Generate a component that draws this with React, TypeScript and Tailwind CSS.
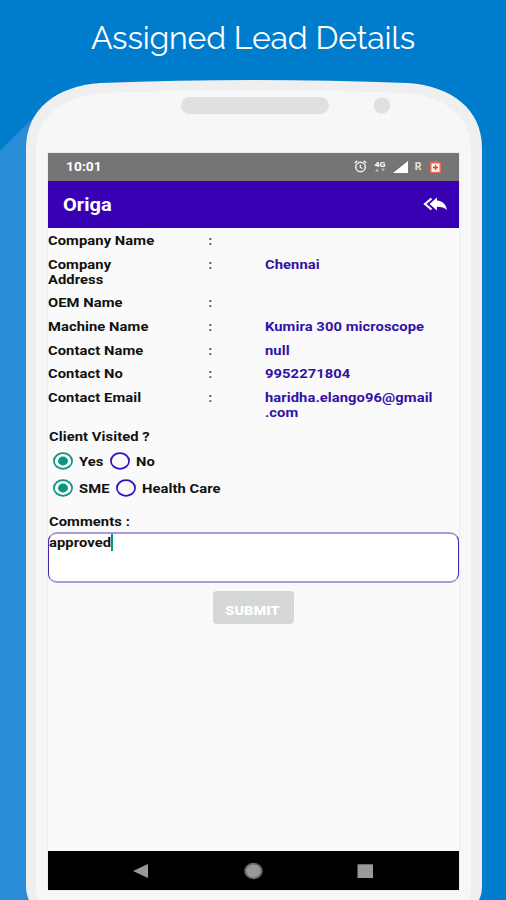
const rows = [
    { label: ["Company Name"], value: [] },
    { label: ["Company", "Address"], value: ["Chennai"] },
    { label: ["OEM Name"], value: [] },
    { label: ["Machine Name"], value: ["Kumira 300 microscope"] },
    { label: ["Contact Name"], value: ["null"] },
    { label: ["Contact No"], value: ["9952271804"] },
    { label: ["Contact Email"], value: ["haridha.elango96@gmail", ".com"] },
];

function Lines({ lines }: { lines: string[] }) {
    return (
        <div className="origin-left scale-x-[1.18] whitespace-nowrap">
            {lines.map((line) => (
                <div key={line}>{line}</div>
            ))}
        </div>
    );
}

function Radio({ checked = false }: { checked?: boolean }) {
    return (
        <svg width="20" height="18" viewBox="0 0 20 18" className="shrink-0">
            <ellipse cx="10" cy="9" rx="9.1" ry="7.8" fill="none" strokeWidth="1.7" stroke={checked ? "#0b9580" : "#3311bb"} />
            {checked && <ellipse cx="10" cy="9" rx="5" ry="4.4" fill="#0b9580" />}
        </svg>
    );
}

function Choice({ label, width, checked }: { label: string; width: string; checked?: boolean }) {
    return (
        <div className={`flex items-center gap-[6px] ${width}`}>
            <Radio checked={checked} />
            <Lines lines={[label]} />
        </div>
    );
}

function Backdrop() {
    return (
        <svg className="absolute inset-0" width="506" height="900" viewBox="0 0 506 900">
            <path d="M0 151 L50 101 V900 H0Z" fill="#288dd6" />
            <path d="M29 900 Q26 894 26 886 V148 C26 109 57 86 100 83 Q178 80 254 80 Q330 80 408 83 C451 86 482 109 482 148 V886 Q482 894 479 900Z" fill="#efefef" />
            <path d="M38 900 Q36 894 36 886 V150 C36 118 62 96 102 93 Q178 90 254 90 Q330 90 406 93 C446 96 471 118 471 150 V886 Q471 894 469 900Z" fill="#f5f7f9" />
            <rect x="181" y="97" width="148" height="17" rx="8.5" fill="#e0e0e0" />
            <circle cx="382" cy="105.5" r="8.3" fill="#e0e0e0" />
        </svg>
    );
}

function StatusBar() {
    return (
        <div className="flex h-[28px] items-center bg-[#757575] pr-[18px] pb-px pl-[18px] text-white">
            <span className="origin-left scale-x-[1.1] text-[12.5px] font-bold">10:01</span>
            <div className="ml-auto flex items-center">
                <svg width="13" height="13" viewBox="0 0 13 13" fill="none" stroke="#f0f0f0" strokeWidth="1.5">
                    <ellipse cx="6.5" cy="7" rx="4.8" ry="4.7" />
                    <path d="M0.7 3 L3.3 0.9 M12.3 3 L9.7 0.9" />
                    <path d="M6.3 4.5 V7.3 L8.5 8.5" strokeWidth="1.2" />
                </svg>
                <div className="ml-[7px] flex w-[12px] flex-col items-center text-[8px] leading-[7px] tracking-normal">
                    <span className="scale-x-110">4G</span>
                    <svg width="10" height="4" viewBox="0 0 10 4" fill="#bbb">
                        <path d="M0 3.5 L2 0.5 L4 3.5Z M6 0.5 H10 L8 3.5Z" />
                    </svg>
                </div>
                <svg width="15" height="12" viewBox="0 0 15 12" className="ml-[7px]">
                    <path d="M0 12 L15 0 V12Z" fill="white" />
                </svg>
                <span className="ml-[7px] text-[10.5px] text-white/80">R</span>
                <svg width="11" height="12" viewBox="0 0 11 12" className="ml-[8px]">
                    <path d="M3.5 0 H7.5 V1.2 H11 V12 H0 V1.2 H3.5Z" fill="#e96b52" />
                    <path d="M1.5 2.5 H9.5 V10.8 H1.5Z" fill="#fff0eb" />
                    <path d="M5.5 4 V9 M3 6.5 H8" stroke="#e0452c" strokeWidth="1.5" />
                </svg>
            </div>
        </div>
    );
}

function AppBar() {
    return (
        <div className="flex h-[47px] items-center justify-between bg-[#3700b3] pr-[12px] pl-[15px] text-white">
            <h1 className="origin-left scale-x-[1.08] pt-px text-[18.5px] font-bold">Origa</h1>
            <svg width="24" height="14" viewBox="0 0 24 14" className="relative -top-px">
                <path d="M8.5 1.5 L2 7 L8.5 12.5" fill="none" stroke="white" strokeWidth="2.2" />
                <path d="M14 0.5 V3.5 C20 4 23 7.5 24 13 C21.5 10.5 18.5 9.7 14 9.7 V13.5 L6.5 7Z" fill="white" />
            </svg>
        </div>
    );
}

function NavBar() {
    return (
        <div className="flex h-[39px] items-center bg-black pl-[85px]">
            <svg width="240" height="18" viewBox="0 0 240 18" fill="#999">
                <path d="M0 9 L15 2 V16Z" />
                <ellipse cx="120.5" cy="9" rx="9.3" ry="8.3" fill="#666" />
                <ellipse cx="120.5" cy="9" rx="7.3" ry="6.5" />
                <path d="M224.5 2.3 H240 V16 H224.5Z" />
            </svg>
        </div>
    );
}

export default function App() {
    return (
        <div className="relative h-[900px] w-[506px] overflow-hidden bg-[#007ccd] font-['Roboto',sans-serif]">
            <Backdrop />
            <div className="relative flex flex-col items-center">
                <h2 className="flex h-[153px] items-start pt-[16px] font-['Raleway','Lato',sans-serif] text-[32px] leading-[44px] tracking-[-0.18px] text-white">
                    Assigned Lead Details
                </h2>
                <div className="flex h-[737px] w-[411px] flex-col bg-[#fafafa] text-[12.5px] leading-[15px] font-bold tracking-[0.06px] text-[#111] shadow-[0_0_0_1px_#eceeee]">
                    <StatusBar />
                    <AppBar />
                    <div className="flex flex-col gap-[8.7px] pt-[5px]">
                        {rows.map((row) => (
                            <div key={row.label[0]} className="flex">
                                <div className="w-[161px]">
                                    <Lines lines={row.label} />
                                </div>
                                <div className="w-[56px] text-[#444]">:</div>
                                <div className="text-[#3311a5]">
                                    <Lines lines={row.value} />
                                </div>
                            </div>
                        ))}
                    </div>
                    <div className="mt-[9px] ml-px">
                        <Lines lines={["Client Visited ?"]} />
                    </div>
                    <div className="mt-[7px] flex h-[20px] pl-[5px]">
                        <Choice label="Yes" width="w-[57px]" checked />
                        <Choice label="No" width="w-[60px]" />
                    </div>
                    <div className="mt-[7px] flex h-[20px] pl-[5px]">
                        <Choice label="SME" width="w-[63px]" checked />
                        <Choice label="Health Care" width="w-[110px]" />
                    </div>
                    <div className="mt-[16px] ml-px">
                        <Lines lines={["Comments :"]} />
                    </div>
                    <div className="mt-[3px] flex h-[51px] items-start rounded-[9px] border-x-[1.5px] border-y-2 border-x-[#4526ac] border-y-[#a79bd9] bg-white">
                        <div className="w-[62px] pt-px">
                            <Lines lines={["approved"]} />
                        </div>
                        <div className="h-[17px] w-[2px] bg-[#0b9580]" />
                    </div>
                    <button className="mx-auto mt-[8px] flex h-[33px] w-[81px] items-center justify-center rounded-sm bg-[#d6d7d7] pt-[5px] text-white">
                        <span className="scale-x-[1.16] font-black">SUBMIT</span>
                    </button>
                    <div className="mt-auto">
                        <NavBar />
                    </div>
                </div>
            </div>
        </div>
    );
}
